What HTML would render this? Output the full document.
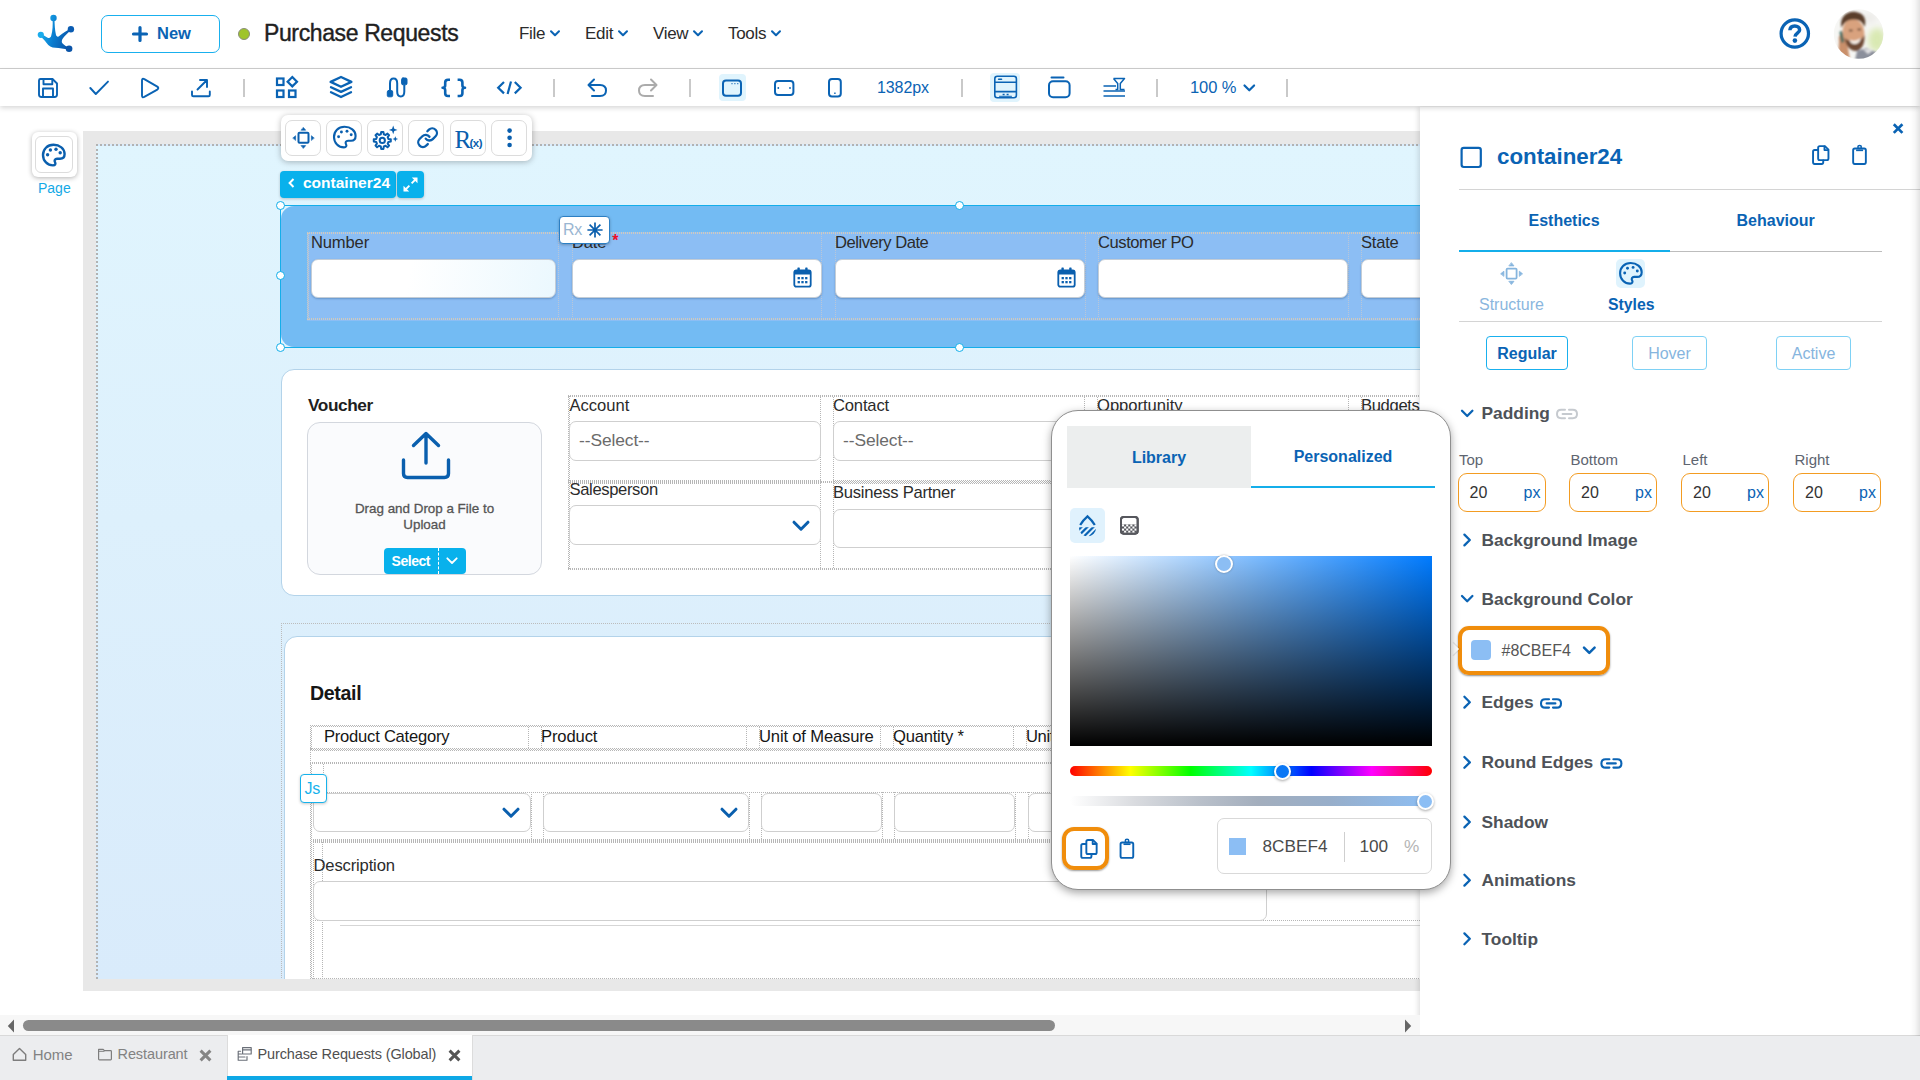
<!DOCTYPE html>
<html>
<head>
<meta charset="utf-8">
<title>Purchase Requests</title>
<style>
*{box-sizing:border-box;margin:0;padding:0}
html,body{width:1920px;height:1080px;overflow:hidden;background:#fff;font-family:"Liberation Sans",sans-serif;color:#222}
.abs{position:absolute}
#root{position:relative;width:1920px;height:1080px;overflow:hidden;background:#fff}
svg{display:block;overflow:visible}
.t{position:absolute;white-space:nowrap;line-height:1}
.blue{color:#0a63b4}
/* top bar */
#topbar{left:0;top:0;width:1920px;height:69px;background:#fff;border-bottom:1px solid #cfcfcf}
#toolbar{z-index:5;left:0;top:69px;width:1920px;height:37px;background:#fff;box-shadow:0 2px 5px rgba(0,0,0,.16)}
.sep{position:absolute;top:10px;width:2px;height:18px;background:#c9c9c9}
/* canvas */
#canvas{left:0;top:107px;width:1420px;height:908px;overflow:hidden;background:#fff}
#gray{left:83px;top:24px;width:1340px;height:859px;background:#e8e8e8}
#page{left:96px;top:37px;width:1330px;height:835px;background:linear-gradient(180deg,#e0f5fe 0%,#ddf0fc 45%,#d9ebfb 100%);border-left:2px dotted #b2b2b2;border-top:2px dotted #b2b2b2}
.inp{position:absolute;background:#fff;border:1px solid #cfcfcf;border-radius:7px}
.lbl{position:absolute;white-space:nowrap;line-height:1;font-size:16px;color:#2b2b2b}
.vd{position:absolute;width:0;border-left:1px dotted #a9a9a9}
.hd{position:absolute;height:0;border-top:1px dotted #a9a9a9}
.hnd{width:9px;height:9px;border-radius:50%;background:#fff;border:1.5px solid #10aeea}
.fb{top:13px;width:36px;height:36px;border:1px solid #dcdcdc;border-radius:7px;background:#fff}

.v1{position:absolute;width:1px;background:repeating-linear-gradient(to bottom,var(--c,#b4b4b4) 0 1px,transparent 1px 2px)}
.v2{position:absolute;width:2px;background:repeating-linear-gradient(to bottom,var(--c,#b4b4b4) 0 1px,transparent 1px 2px) 0 0/1px 100% no-repeat,repeating-linear-gradient(to bottom,transparent 0 1px,var(--c,#b4b4b4) 1px 2px) 1px 0/1px 100% no-repeat}
.h1{position:absolute;height:1px;background:repeating-linear-gradient(to right,var(--c,#b4b4b4) 0 1px,transparent 1px 2px)}
.h2{position:absolute;height:2px;background:repeating-linear-gradient(to right,var(--c,#b4b4b4) 0 1px,transparent 1px 2px)}
.h4{position:absolute;height:4px;background:repeating-linear-gradient(to right,var(--c,#b4b4b4) 0 1px,transparent 1px 2px)}
.hx{position:absolute;height:2px;background:repeating-linear-gradient(to right,var(--c,#b4b4b4) 0 1px,transparent 1px 2px) 0 0/100% 1px no-repeat,repeating-linear-gradient(to right,transparent 0 1px,var(--c,#b4b4b4) 1px 2px) 0 1px/100% 1px no-repeat}
/* right panel */
#panel{left:1420px;top:107px;width:500px;height:929px;background:#fff;box-shadow:-2px 0 5px rgba(0,0,0,.12)}
.sec{position:absolute;white-space:nowrap;line-height:1;font-size:17.35px;font-weight:bold;color:#4e5258}
.pl{font-size:15px;color:#5e6570}
.pi{top:366px;width:88px;height:39px;border:1.5px solid #f39c22;border-radius:9px}
.pv{top:378px;font-size:16px;color:#333}
.pu{top:378px;font-size:16px;color:#0a63b4}
#panel .t{margin-top:1px}
#panel .sec{margin-top:.8px}
#panel .pl{margin-top:0}
#panel .pv,#panel .pu{margin-top:.4px}
/* bottom */
#hscroll{left:0;top:1015px;width:1420px;height:21px;background:#f7f7f7}
#tabs{left:0;top:1035px;width:1920px;height:45px;background:#ecedef;border-top:1px solid #d9d9d9}
</style>
</head>
<body>
<div id="root">

<!-- ================= CANVAS ================= -->
<div id="canvas" class="abs">
  <div id="gray" class="abs"></div>
  <div id="page" class="abs"></div>
  <!-- ===== selected container24 ===== -->
  <div class="abs" style="left:281px;top:99px;width:1160px;height:141px;border-radius:13px;background:#73bbf3"></div>
  <div class="abs" style="left:279.5px;top:97.5px;width:1160px;height:143px;border:1.6px solid #14aeea"></div>
  <div class="abs" style="left:307px;top:125px;width:1130px;height:89px;background:#8cbef4"></div>
  <div class="v2" style="left:307px;top:125px;height:88px;--c:#cdc9c0"></div>
  <div class="h2" style="left:307px;top:125px;width:1133px;--c:#cdc9c0"></div>
  <div class="h2" style="left:307px;top:211px;width:1133px;--c:#cdc9c0"></div>
  <div class="v1" style="left:558px;top:127px;height:84px;--c:#b9c6d8"></div>
  <div class="v1" style="left:572px;top:127px;height:84px;--c:#b9c6d8"></div>
  <div class="v1" style="left:821px;top:127px;height:84px;--c:#b9c6d8"></div>
  <div class="v1" style="left:835px;top:127px;height:84px;--c:#b9c6d8"></div>
  <div class="v1" style="left:1085px;top:127px;height:84px;--c:#b9c6d8"></div>
  <div class="v1" style="left:1098px;top:127px;height:84px;--c:#b9c6d8"></div>
  <div class="v1" style="left:1348px;top:127px;height:84px;--c:#b9c6d8"></div>
  <div class="v1" style="left:1361px;top:127px;height:84px;--c:#b9c6d8"></div>
  <div class="lbl" style="left:311px;top:127.7px;font-size:16.6px;letter-spacing:-0.172px">Number</div>
  <div class="lbl" style="left:572px;top:127.7px;font-size:16.6px;letter-spacing:-.2px">Date <span style="color:#ee1126;font-size:16px;font-weight:bold;position:relative;top:-1.5px;left:1.5px">*</span></div>
  <div class="lbl" style="left:835px;top:127.7px;font-size:16.6px;letter-spacing:-0.485px">Delivery Date</div>
  <div class="lbl" style="left:1098px;top:127.7px;font-size:16.6px;letter-spacing:-0.456px">Customer PO</div>
  <div class="lbl" style="left:1361px;top:127.7px;font-size:16.6px;letter-spacing:-0.23px">State</div>
  <div class="inp" style="left:311px;top:152px;width:245px;height:39px;background:linear-gradient(100deg,#fff 0%,#fff 40%,#ebf8fe 100%);border-color:#c4cdd6;box-shadow:0 1px 2px rgba(0,40,90,.28)"></div>
  <div class="inp" style="left:572px;top:152px;width:250px;height:39px;border-color:#c4cdd6;box-shadow:0 1px 2px rgba(0,40,90,.28)"></div>
  <div class="inp" style="left:835px;top:152px;width:250px;height:39px;border-color:#c4cdd6;box-shadow:0 1px 2px rgba(0,40,90,.28)"></div>
  <div class="inp" style="left:1098px;top:152px;width:250px;height:39px;border-color:#c4cdd6;box-shadow:0 1px 2px rgba(0,40,90,.28)"></div>
  <div class="inp" style="left:1361px;top:152px;width:100px;height:39px;border-color:#c4cdd6;box-shadow:0 1px 2px rgba(0,40,90,.28)"></div>
  <!-- calendar icons -->
  <svg class="abs" style="left:793px;top:160px" width="19" height="21" viewBox="0 0 19 21"><rect x="1.3" y="3.3" width="16.4" height="16.4" rx="2" fill="#fff" stroke="#0a5fae" stroke-width="1.8"/><path d="M1.3 4.5Q1.3 3.3 2.5 3.3H16.5Q17.7 3.3 17.7 4.5V7.6H1.3Z" fill="#0a5fae"/><rect x="4.4" y=".4" width="2.4" height="4" rx=".7" fill="#0a5fae"/><rect x="12.2" y=".4" width="2.4" height="4" rx=".7" fill="#0a5fae"/><g fill="#0a5fae"><rect x="4.6" y="10" width="2.3" height="2.3"/><rect x="8.35" y="10" width="2.3" height="2.3"/><rect x="12.1" y="10" width="2.3" height="2.3"/><rect x="4.6" y="14" width="2.3" height="2.3"/><rect x="8.35" y="14" width="2.3" height="2.3"/><rect x="12.1" y="14" width="2.3" height="2.3"/></g></svg>
  <svg class="abs" style="left:1057px;top:160px" width="19" height="21" viewBox="0 0 19 21"><rect x="1.3" y="3.3" width="16.4" height="16.4" rx="2" fill="#fff" stroke="#0a5fae" stroke-width="1.8"/><path d="M1.3 4.5Q1.3 3.3 2.5 3.3H16.5Q17.7 3.3 17.7 4.5V7.6H1.3Z" fill="#0a5fae"/><rect x="4.4" y=".4" width="2.4" height="4" rx=".7" fill="#0a5fae"/><rect x="12.2" y=".4" width="2.4" height="4" rx=".7" fill="#0a5fae"/><g fill="#0a5fae"><rect x="4.6" y="10" width="2.3" height="2.3"/><rect x="8.35" y="10" width="2.3" height="2.3"/><rect x="12.1" y="10" width="2.3" height="2.3"/><rect x="4.6" y="14" width="2.3" height="2.3"/><rect x="8.35" y="14" width="2.3" height="2.3"/><rect x="12.1" y="14" width="2.3" height="2.3"/></g></svg>
  <!-- handles -->
  <div class="abs hnd" style="left:276px;top:94px"></div>
  <div class="abs hnd" style="left:955px;top:94px"></div>
  <div class="abs hnd" style="left:276px;top:164px"></div>
  <div class="abs hnd" style="left:276px;top:236px"></div>
  <div class="abs hnd" style="left:955px;top:236px"></div>
  <!-- Rx badge -->
  <div class="abs" style="left:559px;top:109px;width:51px;height:28px;background:#fff;border:1px solid #2b7fc4;border-radius:4px;box-shadow:0 1px 3px rgba(0,0,0,.25)"></div>
  <div class="t" style="left:563px;top:115px;font-size:16px;color:#9ab6d2;letter-spacing:-.3px">Rx</div>
  <svg class="abs" style="left:586px;top:114px" width="18" height="18" viewBox="0 0 18 18"><path d="M9 1.4V16.6M1.4 9H16.6M3.6 3.6L14.4 14.4M3.6 14.4L14.4 3.6" stroke="#0a5fae" stroke-width="1.7" fill="none"/></svg>
  <!-- container tag -->
  <div class="abs" style="left:280px;top:63.5px;width:116px;height:27px;background:#08b1ec;border-radius:4px;box-shadow:0 1px 3px rgba(0,0,0,.2)"></div>
  <svg class="abs" style="left:288px;top:71px" width="7" height="10" viewBox="0 0 7 10"><path d="M5.5 1L1.6 5L5.5 9" stroke="#fff" stroke-width="2" fill="none"/></svg>
  <div class="t" style="left:303px;top:68px;font-size:15.5px;font-weight:bold;color:#fff">container24</div>
  <div class="abs" style="left:397px;top:63.5px;width:27px;height:27px;background:#08b1ec;border-radius:4px;box-shadow:0 1px 3px rgba(0,0,0,.2)"></div>
  <svg class="abs" style="left:402px;top:68.5px" width="17" height="17" viewBox="0 0 17 17"><path d="M9.6 7.4L14.6 2.4M7.4 9.6L2.4 14.6" stroke="#fff" stroke-width="1.9"/><path d="M9.8 1.5H15.5V7.2Z M7.2 15.5H1.5V9.8Z" fill="#fff"/></svg>
  <!-- float toolbar -->
  <div class="abs" style="left:281px;top:8px;width:251px;height:46px;background:#fff;border-radius:7px;box-shadow:0 1px 6px rgba(0,0,0,.28)"></div>
  <div class="abs fb" style="left:285px"></div><div class="abs fb" style="left:326px"></div><div class="abs fb" style="left:367px"></div><div class="abs fb" style="left:408px"></div><div class="abs fb" style="left:450px"></div><div class="abs fb" style="left:491px"></div>
  <svg class="abs" style="left:281px;top:8px" width="251" height="46" viewBox="281 115 251 46" fill="none" stroke="#0a5fae" stroke-width="2" stroke-linecap="round" stroke-linejoin="round">
    <!-- move -->
    <rect x="298.5" y="132.8" width="10" height="10" rx="1"/>
    <g fill="#0a5fae" stroke-width=".6"><path d="M303.5 127.6L305.7 130.2H301.3Z"/><path d="M303.5 148.2L305.7 145.6H301.3Z"/><path d="M293 137.9L295.6 135.7V140.1Z"/><path d="M314 137.9L311.4 135.7V140.1Z"/></g>
    <!-- palette -->
    <path d="M344.5 126.8C338.3 126.8 334 131.3 334 137C334 143 338.6 147.4 344 147.4C346.3 147.4 346.9 145.6 346 144.2C345 142.6 346 140.7 348 140.7H351C354 140.7 355.6 138.6 355.6 136C355.6 130.6 350.6 126.8 344.5 126.8Z" stroke-width="2.1"/>
    <g fill="#0a5fae" stroke="none"><circle cx="338.6" cy="136.8" r="1.45"/><circle cx="341.4" cy="132" r="1.45"/><circle cx="347" cy="131.2" r="1.45"/><circle cx="351.2" cy="134.8" r="1.45"/></g>
    <!-- gear + sparkles -->
    <g stroke-width="2"><circle cx="382.3" cy="140.4" r="2.6"/><path d="M380.8 134.3L381.2 131.9L383.4 131.9L383.8 134.3L385.6 135.0L387.5 133.6L389.1 135.2L387.7 137.1L388.4 138.9L390.8 139.3L390.8 141.5L388.4 141.9L387.7 143.7L389.1 145.6L387.5 147.2L385.6 145.8L383.8 146.5L383.4 148.9L381.2 148.9L380.8 146.5L379.0 145.8L377.1 147.2L375.5 145.6L376.9 143.7L376.2 141.9L373.8 141.5L373.8 139.3L376.2 138.9L376.9 137.1L375.5 135.2L377.1 133.6L379.0 135.0Z"/></g>
    <g fill="#0a5fae" stroke="none"><path d="M393.2 125.6L394.3 128.8L397.5 129.9L394.3 131L393.2 134.2L392.1 131L388.9 129.9L392.1 128.8Z"/><path d="M395.3 136.2L396.1 138.2L398.1 139L396.1 139.8L395.3 141.8L394.5 139.8L392.5 139L394.5 138.2Z"/></g>
    <!-- link -->
    <g stroke-width="2.45" transform="translate(416.3 126.4) scale(.94)"><path d="M10 13a5 5 0 0 0 7.54.54l3-3a5 5 0 0 0-7.07-7.07l-1.72 1.71"/><path d="M14 11a5 5 0 0 0-7.54-.54l-3 3a5 5 0 0 0 7.07 7.07l1.71-1.71"/></g>
    <!-- dots -->
    <g fill="#0a5fae" stroke="none"><circle cx="509.6" cy="130.6" r="2.3"/><circle cx="509.6" cy="137.8" r="2.3"/><circle cx="509.6" cy="145" r="2.3"/></g>
  </svg>
  <div class="t" style="left:454.5px;top:19.5px;font-family:'Liberation Serif',serif;font-size:25px;color:#0a5fae;letter-spacing:-1px">R</div>
  <div class="t" style="left:469.5px;top:30.5px;font-size:11.5px;font-weight:bold;color:#0a5fae;letter-spacing:-.5px">(x)</div>
  <!-- Page button -->
  <div class="abs" style="left:32px;top:24.5px;width:45px;height:45px;background:#fff;border-radius:6px;box-shadow:0 1px 5px rgba(0,0,0,.3)"></div>
  <div class="abs" style="left:35px;top:29px;width:38px;height:37px;border:1px solid #dcdcdc;border-radius:6px"></div>
  <svg class="abs" style="left:40px;top:33.5px" width="28" height="28" viewBox="331 123 28 28" fill="none" stroke="#0a5fae" stroke-width="2.4" stroke-linecap="round" stroke-linejoin="round"><path d="M344.5 126.8C338.3 126.8 334 131.3 334 137C334 143 338.6 147.4 344 147.4C346.3 147.4 346.9 145.6 346 144.2C345 142.6 346 140.7 348 140.7H351C354 140.7 355.6 138.6 355.6 136C355.6 130.6 350.6 126.8 344.5 126.8Z"/><g fill="#0a5fae" stroke="none"><circle cx="338.6" cy="136.8" r="1.7"/><circle cx="341.4" cy="132" r="1.7"/><circle cx="347" cy="131.2" r="1.7"/><circle cx="351.2" cy="134.8" r="1.7"/></g></svg>
  <div class="t" style="left:38px;top:74px;font-size:14px;color:#14a9e6">Page</div>
  <!-- ===== card 2 ===== -->
  <div class="abs" style="left:281px;top:262px;width:1170px;height:227px;background:#fff;border:1px solid #b3d3ea;border-radius:13px"></div>
  <div class="t" style="left:308px;top:290px;font-size:17.3px;font-weight:bold;color:#1f1f1f;letter-spacing:-.45px">Voucher</div>
  <div class="abs" style="left:307px;top:315px;width:235px;height:153px;background:#fafbfd;border:1px solid #d3d7de;border-radius:13px"></div>
  <svg class="abs" style="left:400px;top:323px" width="52" height="54" viewBox="0 0 52 54" fill="none" stroke="#0a5fae" stroke-width="3.4" stroke-linecap="round" stroke-linejoin="round"><path d="M26 33V4M13.5 15.5L26 3.5L38.5 15.5"/><path d="M3.5 30V43.5Q3.5 47.5 7.5 47.5H44.5Q48.5 47.5 48.5 43.5V30"/></svg>
  <div class="t" style="left:307px;top:394px;width:235px;text-align:center;font-size:13.4px;color:#555;-webkit-text-stroke:.3px #555;line-height:16px;white-space:normal;padding:0 40px">Drag and Drop a File to Upload</div>
  <div class="abs" style="left:384px;top:441px;width:82px;height:26px;background:#08b1ec;border-radius:4px"></div>
  <div class="abs" style="left:437.5px;top:441px;width:0;height:26px;border-left:1px dashed #fff"></div>
  <div class="t" style="left:391.5px;top:447px;font-size:14px;font-weight:bold;color:#fff;letter-spacing:-.45px">Select</div>
  <svg class="abs" style="left:446px;top:450px" width="12" height="8" viewBox="0 0 12 8"><path d="M1.3 1.3L6 6L10.7 1.3" fill="none" stroke="#fff" stroke-width="1.8" stroke-linecap="round" stroke-linejoin="round"/></svg>
  <!-- grid dotted -->
  <div class="v2" style="left:568px;top:288px;height:175px;--c:#b6b6b6"></div>
  <div class="h2" style="left:568px;top:288px;width:872px;--c:#b6b6b6"></div>
  <div class="h2" style="left:568px;top:461px;width:872px;--c:#b6b6b6"></div>
  <div class="h4" style="left:568px;top:373px;width:253px;--c:#b6b6b6"></div>
  <div class="h2" style="left:821px;top:374px;width:12px;--c:#b6b6b6"></div>
  <div class="hx" style="left:833px;top:373px;width:252px;--c:#b6b6b6"></div>
  <div class="hx" style="left:833px;top:375px;width:252px;--c:#b6b6b6"></div>
  <div class="h2" style="left:1085px;top:374px;width:12px;--c:#b6b6b6"></div>
  <div class="h4" style="left:1097px;top:373px;width:251px;--c:#b6b6b6"></div>
  <div class="h2" style="left:1348px;top:374px;width:13px;--c:#b6b6b6"></div>
  <div class="h4" style="left:1361px;top:373px;width:79px;--c:#b6b6b6"></div>
  <div class="v1" style="left:820px;top:290px;height:171px;--c:#b6b6b6"></div>
  <div class="v1" style="left:833px;top:290px;height:171px;--c:#b6b6b6"></div>
  <div class="v1" style="left:1084px;top:290px;height:171px;--c:#b6b6b6"></div>
  <div class="v1" style="left:1097px;top:290px;height:171px;--c:#b6b6b6"></div>
  <div class="v1" style="left:1348px;top:290px;height:171px;--c:#b6b6b6"></div>
  <div class="v1" style="left:1361px;top:290px;height:171px;--c:#b6b6b6"></div>
  <div class="lbl" style="left:569.5px;top:290.5px;font-size:16.6px;letter-spacing:-0.024px">Account</div>
  <div class="lbl" style="left:833px;top:290.5px;font-size:16.6px;letter-spacing:-0.17px">Contact</div>
  <div class="lbl" style="left:1097px;top:290.5px;font-size:16.6px;letter-spacing:-0.026px">Opportunity</div>
  <div class="lbl" style="left:1361px;top:290.5px;font-size:16.6px;letter-spacing:-0.342px">Budgets</div>
  <div class="lbl" style="left:569.5px;top:374.7px;font-size:16.6px;letter-spacing:-0.359px">Salesperson</div>
  <div class="lbl" style="left:833px;top:377.7px;font-size:16.6px;letter-spacing:-0.254px">Business Partner</div>
  <div class="inp" style="left:569px;top:314px;width:252px;height:40px"></div>
  <div class="inp" style="left:833px;top:314px;width:252px;height:40px"></div>
  <div class="inp" style="left:1097px;top:314px;width:252px;height:40px"></div>
  <div class="inp" style="left:1361px;top:314px;width:100px;height:40px"></div>
  <div class="inp" style="left:569px;top:398px;width:252px;height:40px"></div>
  <div class="inp" style="left:833px;top:402px;width:252px;height:39px"></div>
  <div class="t" style="left:579px;top:325px;font-size:17.4px;color:#6b6b6b;letter-spacing:-.1px">--Select--</div>
  <div class="t" style="left:843px;top:325px;font-size:17.4px;color:#6b6b6b;letter-spacing:-.1px">--Select--</div>
  <svg class="abs" style="left:792px;top:413px" width="18" height="12" viewBox="0 0 18 12"><path d="M2 2.2L9 9.2L16 2.2" fill="none" stroke="#0a5fae" stroke-width="3" stroke-linecap="round" stroke-linejoin="round"/></svg>
  <!-- ===== card 3 ===== -->
  <div class="v1" style="left:281px;top:516px;height:380px;--c:#bcbcbc"></div>
  <div class="h1" style="left:281px;top:516px;width:1170px;--c:#bcbcbc"></div>
  <div class="abs" style="left:284px;top:529px;width:1170px;height:380px;background:#fff;border:1px solid #b3d3ea;border-radius:13px"></div>
  <div class="t" style="left:310px;top:576px;font-size:19.6px;font-weight:bold;color:#161616;letter-spacing:-.35px;margin-top:.8px">Detail</div>
  <!-- header grid -->
  <div class="hx" style="left:310px;top:618px;width:1130px;--c:#b6b6b6"></div>
  <div class="v2" style="left:310px;top:618px;height:25px;--c:#b6b6b6"></div>
  <div class="hx" style="left:310px;top:641px;width:1130px;--c:#b6b6b6"></div>
  <div class="h1" style="left:310px;top:643px;width:1130px;--c:#b6b6b6"></div>
  <div class="v1" style="left:528px;top:620px;height:21px;--c:#b6b6b6"></div>
  <div class="v1" style="left:541px;top:620px;height:21px;--c:#b6b6b6"></div>
  <div class="v1" style="left:746px;top:620px;height:21px;--c:#b6b6b6"></div>
  <div class="v1" style="left:759px;top:620px;height:21px;--c:#b6b6b6"></div>
  <div class="v1" style="left:880px;top:620px;height:21px;--c:#b6b6b6"></div>
  <div class="v1" style="left:893px;top:620px;height:21px;--c:#b6b6b6"></div>
  <div class="v1" style="left:1013px;top:620px;height:21px;--c:#b6b6b6"></div>
  <div class="v1" style="left:1026px;top:620px;height:21px;--c:#b6b6b6"></div>
  <div class="v1" style="left:310px;top:643px;height:12px;--c:#b6b6b6"></div>
  <div class="h2" style="left:310px;top:655px;width:1130px;--c:#b6b6b6"></div>
  <div class="v2" style="left:310px;top:657px;height:216px;--c:#b6b6b6"></div>
  <div class="v1" style="left:323px;top:657px;height:28px;--c:#b6b6b6"></div>
  <div class="h1" style="left:313px;top:685px;width:1127px;--c:#b6b6b6"></div>
  <div class="v1" style="left:531px;top:685px;height:48px;--c:#b6b6b6"></div>
  <div class="v1" style="left:543px;top:685px;height:48px;--c:#b6b6b6"></div>
  <div class="v1" style="left:749px;top:685px;height:48px;--c:#b6b6b6"></div>
  <div class="v1" style="left:761px;top:685px;height:48px;--c:#b6b6b6"></div>
  <div class="v1" style="left:882px;top:685px;height:48px;--c:#b6b6b6"></div>
  <div class="v1" style="left:894px;top:685px;height:48px;--c:#b6b6b6"></div>
  <div class="v1" style="left:1015px;top:685px;height:48px;--c:#b6b6b6"></div>
  <div class="v1" style="left:1028px;top:685px;height:48px;--c:#b6b6b6"></div>
  <div class="h4" style="left:313px;top:732px;width:1127px;--c:#b6b6b6"></div>
  <div class="v1" style="left:313px;top:735px;height:138px;--c:#b6b6b6"></div>
  <div class="v1" style="left:322px;top:735px;height:138px;--c:#b6b6b6"></div>
  <div class="h1" style="left:313px;top:813px;width:1127px;--c:#b6b6b6"></div>
  <div class="h1" style="left:310px;top:871px;width:1130px;--c:#b6b6b6"></div>
  <div class="lbl" style="left:324px;top:621.7px;color:#161616;font-size:16.6px;letter-spacing:-0.24px">Product Category</div>
  <div class="lbl" style="left:541px;top:621.7px;color:#161616;font-size:16.6px;letter-spacing:-0.127px">Product</div>
  <div class="lbl" style="left:759px;top:621.7px;color:#161616;font-size:16.6px;letter-spacing:-0.163px">Unit of Measure</div>
  <div class="lbl" style="left:893px;top:621.7px;color:#161616;font-size:16.6px;letter-spacing:-0.217px">Quantity *</div>
  <div class="lbl" style="left:1026px;top:621.7px;color:#161616;font-size:16.6px;letter-spacing:-0.394px">Unit Price</div>
  <!-- row grid -->
  <div class="inp" style="left:313px;top:686px;width:218px;height:39px"></div>
  <div class="inp" style="left:543px;top:686px;width:206px;height:39px"></div>
  <div class="inp" style="left:761px;top:686px;width:121px;height:39px"></div>
  <div class="inp" style="left:894px;top:686px;width:121px;height:39px"></div>
  <div class="inp" style="left:1028px;top:686px;width:121px;height:39px"></div>
  <svg class="abs" style="left:502px;top:700px" width="18" height="12" viewBox="0 0 18 12"><path d="M2 2.2L9 9.2L16 2.2" fill="none" stroke="#0a5fae" stroke-width="3" stroke-linecap="round" stroke-linejoin="round"/></svg>
  <svg class="abs" style="left:720px;top:700px" width="18" height="12" viewBox="0 0 18 12"><path d="M2 2.2L9 9.2L16 2.2" fill="none" stroke="#0a5fae" stroke-width="3" stroke-linecap="round" stroke-linejoin="round"/></svg>
  <!-- Js badge -->
  <div class="abs" style="left:300px;top:667px;width:27px;height:29px;background:#fff;border:1px solid #16b2ec;border-radius:4px;box-shadow:0 1px 3px rgba(0,0,0,.22)"></div>
  <div class="t" style="left:304.5px;top:674px;font-size:16px;color:#16b2ec;letter-spacing:-.2px">Js</div>
  <div class="lbl" style="left:313.5px;top:750.7px;font-size:16.6px;letter-spacing:-0.156px">Description</div>
  <div class="inp" style="left:313px;top:774px;width:954px;height:40px"></div>
  <div class="abs" style="left:340px;top:818px;width:1100px;height:1px;background:#d6d6d6"></div>
  <div class="abs" style="left:0;top:872px;width:1420px;height:40px;background:#fff"></div>
  <div class="abs" style="left:83px;top:872px;width:1340px;height:12px;background:#e8e8e8"></div>
</div>

<!-- ================= TOP BAR ================= -->
<div id="topbar" class="abs">
  <!-- logo -->
  <svg class="abs" style="left:34px;top:10px" width="44" height="46" viewBox="34 10 44 46">
    <defs><linearGradient id="lg" gradientUnits="userSpaceOnUse" x1="40" y1="34" x2="70" y2="42"><stop offset="0" stop-color="#1aacec"/><stop offset=".45" stop-color="#0a7ccf"/><stop offset="1" stop-color="#0a52a6"/></linearGradient></defs>
    <g fill="url(#lg)">
      <path d="M52.5 18.5C53 25 52.6 31 51.2 35.8C50.6 38 49.2 38.4 47.2 37.4C45.4 36.4 43.4 35.2 41.3 33.9L40.2 35.8C42.6 38.4 45 40.6 46.6 43C48.6 46 51.6 47.6 55.4 47.8C59.6 48 63.8 48.6 68.6 49.8L69.2 48C66.4 46.6 63.8 45 62.6 43.6C61.4 42.2 61.6 40.4 62.8 38.6C64.6 35.8 67.6 33 71.2 30.2L70.3 28.7C66 31 62.4 33.2 59.6 35.8C58 37.4 56.4 36.8 55.9 34.6C54.9 30.2 54.6 24.6 54.5 18.5Z"/>
      <circle cx="53.5" cy="18" r="3.2"/>
      <circle cx="70.9" cy="29.2" r="3.2" fill="#0a5cb2"/>
      <circle cx="40.8" cy="34.8" r="3.1" fill="#1aacec"/>
      <circle cx="69.1" cy="48.8" r="3.3" fill="#0a54a8"/>
    </g>
  </svg>
  <!-- New button -->
  <div class="abs" style="left:101px;top:15px;width:119px;height:38px;border:1px solid #19b0ee;border-radius:7px"></div>
  <svg class="abs" style="left:132px;top:26px" width="16" height="16" viewBox="0 0 16 16"><path d="M8 1.5V14.5M1.5 8H14.5" stroke="#0a63b4" stroke-width="3.2" stroke-linecap="round" fill="none"/></svg>
  <div class="t blue" style="left:157px;top:25px;font-size:16.5px;font-weight:bold">New</div>
  <div class="abs" style="left:238px;top:28px;width:12px;height:12px;border-radius:50%;background:#9fc42a;border:1px solid #8a8f7a"></div>
  <div class="t" id="ttl" style="left:264px;top:21.5px;font-size:23px;color:#1f1f1f;-webkit-text-stroke:.4px #1f1f1f;letter-spacing:-.38px">Purchase Requests</div>
  <!-- menus -->
  <div class="t" style="left:519px;top:25px;font-size:17px;color:#2b2b2b;letter-spacing:-.3px">File</div>
  <div class="t" style="left:585px;top:25px;font-size:17px;color:#2b2b2b;letter-spacing:-.3px">Edit</div>
  <div class="t" style="left:653px;top:25px;font-size:17px;color:#2b2b2b;letter-spacing:-.3px">View</div>
  <div class="t" style="left:728px;top:25px;font-size:17px;color:#2b2b2b;letter-spacing:-.3px">Tools</div>
  <svg class="abs" style="left:550px;top:30px" width="10" height="7" viewBox="0 0 10 7"><path d="M1 1.2L5 5.3L9 1.2" fill="none" stroke="#0a63b4" stroke-width="2" stroke-linecap="round" stroke-linejoin="round"/></svg>
  <svg class="abs" style="left:618px;top:30px" width="10" height="7" viewBox="0 0 10 7"><path d="M1 1.2L5 5.3L9 1.2" fill="none" stroke="#0a63b4" stroke-width="2" stroke-linecap="round" stroke-linejoin="round"/></svg>
  <svg class="abs" style="left:693px;top:30px" width="10" height="7" viewBox="0 0 10 7"><path d="M1 1.2L5 5.3L9 1.2" fill="none" stroke="#0a63b4" stroke-width="2" stroke-linecap="round" stroke-linejoin="round"/></svg>
  <svg class="abs" style="left:771px;top:30px" width="10" height="7" viewBox="0 0 10 7"><path d="M1 1.2L5 5.3L9 1.2" fill="none" stroke="#0a63b4" stroke-width="2" stroke-linecap="round" stroke-linejoin="round"/></svg>
  <!-- help -->
  <svg class="abs" style="left:1779px;top:18px" width="32" height="32" viewBox="0 0 32 32"><circle cx="15.8" cy="15.5" r="13.7" fill="none" stroke="#0a63b4" stroke-width="3.2"/><path d="M10.9 12.3C11 9.3 13.1 7.9 15.8 7.9C18.7 7.9 20.6 9.5 20.6 11.9C20.6 15 16.1 15.2 16 18.6" fill="none" stroke="#0a63b4" stroke-width="3.5" stroke-linecap="butt"/><circle cx="15.9" cy="22.6" r="2.3" fill="#0a63b4"/></svg>
  <!-- avatar -->
  <svg class="abs" style="left:1833px;top:8px" width="52" height="52" viewBox="0 0 52 52">
    <defs><clipPath id="av"><circle cx="25.6" cy="26" r="24.8"/></clipPath><filter id="bl" x="-20%" y="-20%" width="140%" height="140%"><feGaussianBlur stdDeviation="1.1"/></filter><filter id="bl2" x="-30%" y="-30%" width="160%" height="160%"><feGaussianBlur stdDeviation="3"/></filter></defs>
    <g clip-path="url(#av)">
      <rect width="52" height="52" fill="#f6f6f4"/>
      <ellipse cx="44" cy="32" rx="9" ry="12" fill="#d9e9b2" filter="url(#bl2)"/>
      <ellipse cx="36" cy="10" rx="8" ry="5" fill="#ecebe8" filter="url(#bl2)"/>
      <g filter="url(#bl)">
        <path d="M22 52L24 43L33 40L45 45L49 53Z" fill="#8b8f9b"/>
        <path d="M30 41L35 46L40 42Z" fill="#e4e4e6"/>
        <path d="M6 33C5 28 8 24 11 26L15 40L17 52H5Z" fill="#c98f6a"/>
        <ellipse cx="20.5" cy="24.5" rx="10.8" ry="13.8" fill="#d9a27e" transform="rotate(-8 20.5 24.5)"/>
        <path d="M8.5 20C6 9 14 2.5 23 4C31 5 34 12 31.5 19C30 14 26 11 20 11.5C14 12 10.5 15 8.5 20Z" fill="#5a3d2c"/>
        <path d="M11.5 30C13 38 17 43 23 43C29 42 32 36 31.5 27C29 31 26 33 22 33C18 33 14 32.5 11.5 30Z" fill="#6e4a35"/>
        <path d="M16.5 31.5Q22 34.5 28 30Q26.5 36 21.5 36Q17.5 36 16.5 31.5Z" fill="#f7efe9"/>
        <path d="M16 22.5H19.5M24.5 21.5H28" stroke="#4a3226" stroke-width="1.6"/>
        <path d="M6.5 24L9 22.5L11 34L8.5 35Z" fill="#3d6b60"/>
      </g>
    </g>
  </svg>
</div>
<div id="toolbar" class="abs">
  <svg class="abs" style="left:0;top:0" width="1300" height="37" viewBox="0 69 1300 37" fill="none" stroke="#0a63b4" stroke-width="1.9" stroke-linecap="round" stroke-linejoin="round">
    <!-- save -->
    <path d="M40.5 79H52.5L57 83.5V94.5Q57 97 54.5 97H41.5Q39 97 39 94.5V80.5Q39 79 40.5 79Z"/>
    <path d="M43.5 79.3V84.2H52.3V79.3"/><path d="M43 96.8V88.5H53V96.8"/>
    <!-- check -->
    <path d="M90.3 88L95.8 94L108 81.6"/>
    <!-- play -->
    <path d="M142 80.5V95.5Q142 98 144.3 96.8L157.3 89.6Q159.3 88 157.3 86.6L144.3 79.2Q142 78 142 80.5Z"/>
    <!-- export -->
    <path d="M192 91.5V95Q192 96.3 193.3 96.3H208.5Q209.8 96.3 209.8 95V91.5"/><path d="M197.5 89.5L207 80M200 80H207V87"/>
    <!-- widgets -->
    <g stroke-width="2.2" stroke-linejoin="miter" stroke-linecap="square"><rect x="277" y="78.5" width="6.5" height="6.5"/><rect x="277" y="90.5" width="6.5" height="6.5"/><rect x="289" y="90.5" width="6.5" height="6.5"/><path d="M292.3 77L297 81.7L292.3 86.4L287.6 81.7Z"/></g>
    <!-- layers -->
    <g stroke-width="2.3" stroke-linejoin="round"><path d="M341 77L351.4 81.9L341 86.8L330.6 81.9Z"/><path d="M331 87.2L341 91.9L351 87.2"/><path d="M331 92.3L341 97L351 92.3"/></g>
    <!-- cable -->
    <g stroke-width="2"><path d="M390 90V83.5Q390 78.6 393.6 78.6Q397.2 78.6 397.2 83.5V91.5Q397.2 96.4 400.8 96.4Q404.3 96.4 404.3 91.5V85.5"/><rect x="387.3" y="90.5" width="5.4" height="6.3" rx="1.4" fill="#0a63b4" stroke-width="1"/><rect x="401.6" y="78" width="5.4" height="6.8" rx="1.4" fill="#0a63b4" stroke-width="1"/></g>
    <!-- braces -->
    <g stroke-width="2.6" stroke-linecap="butt"><path d="M450 79.8H448Q445.2 79.8 445.2 82.6V85.3Q445.2 87.8 442.6 87.8Q445.2 87.8 445.2 90.3V93.2Q445.2 96 448 96H450"/><path d="M457.6 79.8H459.6Q462.4 79.8 462.4 82.6V85.3Q462.4 87.8 465 87.8Q462.4 87.8 462.4 90.3V93.2Q462.4 96 459.6 96H457.6"/></g>
    <!-- code -->
    <g stroke-width="2.2" stroke-linecap="butt" stroke-linejoin="miter"><path d="M504 82L498.2 87.7L504 93.4"/><path d="M514.8 82L520.6 87.7L514.8 93.4"/><path d="M511 81.5L507.6 94"/></g>
    <!-- undo -->
    <g stroke-width="2"><path d="M594 79.5L588.5 85L594 90.5"/><path d="M589 85H600Q606 85 606 90.5Q606 96 600 96H592"/></g>
    <!-- redo -->
    <g stroke-width="2" stroke="#ababab"><path d="M651 79.5L656.5 85L651 90.5"/><path d="M656 85H645Q639 85 639 90.5Q639 96 645 96H653"/></g>
    <!-- desktop -->
    <rect x="719" y="74" width="27" height="27" rx="4" fill="#e0f4fd" stroke="none"/>
    <rect x="723" y="80.4" width="18" height="15.4" rx="3" stroke-width="2" fill="#e0f4fd"/><path d="M731.5 83.6H732.5M734.4 83.6H735.4M737.3 83.6H738.3" stroke-width="1.3" stroke-linecap="butt"/>
    <!-- tablet -->
    <rect x="775" y="81" width="18.4" height="14" rx="3" stroke-width="2"/><circle cx="778.3" cy="88" r=".9" fill="#0a63b4" stroke="none"/><circle cx="790" cy="88" r=".9" fill="#0a63b4" stroke="none"/>
    <!-- phone -->
    <rect x="829" y="79" width="11.8" height="17.4" rx="3" stroke-width="2"/><path d="M834.2 93.2H835.6" stroke-width="1.4" stroke-linecap="butt"/>
    <!-- header/footer -->
    <rect x="990" y="73" width="30" height="29" rx="4" fill="#e0f4fd" stroke="none"/>
    <g stroke-width="1.6"><rect x="994.8" y="76.3" width="21.6" height="21.4" rx="2.5" fill="#e0f4fd"/><path d="M995 82.2H1016.2M995 91.6H1016.2"/><path d="M998.6 79.2H1001.6" stroke-width="1.4"/><path d="M1002.6 94.4H1004.6M1006.6 94.4H1008.6" stroke-width="1.5" stroke-linecap="butt"/><path d="M999.5 96.3H1011.5" stroke-width="1"/></g>
    <!-- containers -->
    <g stroke-width="2"><path d="M1051.5 77.5H1063.5"/><rect x="1049" y="81.2" width="20.6" height="16" rx="4"/></g>
    <!-- filter lines -->
    <g stroke-width="1.7" stroke-linecap="butt"><path d="M1103.5 86H1116M1103.5 91H1125M1103.5 96H1125"/><path d="M1113.5 78.6H1124.5L1120.3 83.6V89.5H1124.5M1113.5 78.6L1117.7 83.6V89.5H1115.5" stroke-width="1.5"/></g>
    <!-- zoom chevron -->
    <path d="M1244.5 85.5L1249.3 90.3L1254.1 85.5" stroke-width="2.2"/>
  </svg>
  <div class="sep" style="left:243px"></div>
  <div class="sep" style="left:553px"></div>
  <div class="sep" style="left:689px"></div>
  <div class="sep" style="left:961px"></div>
  <div class="sep" style="left:1156px"></div>
  <div class="sep" style="left:1286px"></div>
  <div class="t blue" style="left:877px;top:11px;font-size:16px;letter-spacing:-.1px">1382px</div>
  <div class="t blue" style="left:1190px;top:10px;font-size:16.5px;letter-spacing:-.1px">100 %</div>
</div>

<!-- ================= RIGHT PANEL ================= -->
<div id="panel" class="abs">
  <div class="abs" style="left:0;top:0;width:500px;height:929px">
  <svg class="abs" style="left:0;top:0" width="500" height="929" viewBox="1420 107 500 929" fill="none" stroke="#0a63b4" stroke-width="2" stroke-linecap="round" stroke-linejoin="round">
    <!-- close -->
    <path d="M1893.8 124.3L1902.4 132.9M1902.4 124.3L1893.8 132.9" stroke-width="2.7" stroke-linecap="butt"/>
    <!-- checkbox -->
    <rect x="1461.6" y="147.8" width="19.2" height="19.2" rx="2.2" stroke-width="2.2"/>
    <!-- copy -->
    <g stroke-width="1.9" transform="translate(731.8 -693.9)"><path d="M1086.35 841.65Q1086.35 840.05 1087.95 840.05H1093.1L1096.65 843.6V852.45Q1096.65 854.05 1095.05 854.05H1087.95Q1086.35 854.05 1086.35 852.45Z"/><path d="M1092.7 840.4V844H1096.3"/><path d="M1086.2 843.95H1082.85Q1081.25 843.95 1081.25 845.55V856.25Q1081.25 857.85 1082.85 857.85H1089.85Q1091.45 857.85 1091.45 856.25V854.3"/></g>
    <!-- paste -->
    <g stroke-width="1.9" transform="translate(732.6 -693.9)"><rect x="1120.55" y="842.45" width="12.7" height="15.4" rx="1.6"/><ellipse cx="1127" cy="840.9" rx="1.75" ry="1.6" stroke-width="1.5"/><path d="M1123.5 844.2H1130.5" stroke-width="1.7" stroke-linecap="butt"/></g>
    <!-- structure icon (light) -->
    <g stroke="#86b5de" fill="#86b5de"><rect x="1506.6" y="268.6" width="10" height="10" rx="1" fill="none" stroke-width="1.8"/><g stroke-width=".8"><path d="M1511.6 262.9L1514 265.9H1509.2Z"/><path d="M1511.6 284.3L1514 281.3H1509.2Z"/><path d="M1500.9 273.6L1503.9 271.2V276Z"/><path d="M1522.3 273.6L1519.3 271.2V276Z"/></g></g>
    <!-- styles icon -->
    <rect x="1616" y="259" width="29" height="29" rx="5" fill="#dff3fd" stroke="none"/>
    <g transform="translate(1286.1 136.2)"><path d="M344.5 126.8C338.3 126.8 334 131.3 334 137C334 143 338.6 147.4 344 147.4C346.3 147.4 346.9 145.6 346 144.2C345 142.6 346 140.7 348 140.7H351C354 140.7 355.6 138.6 355.6 136C355.6 130.6 350.6 126.8 344.5 126.8Z" stroke-width="2.1"/><g fill="#0a63b4" stroke="none"><circle cx="338.6" cy="136.8" r="1.45"/><circle cx="341.4" cy="132" r="1.45"/><circle cx="347" cy="131.2" r="1.45"/><circle cx="351.2" cy="134.8" r="1.45"/></g></g>
    <!-- chevrons -->
    <g stroke-width="2.3"><path d="M1462 410.8L1467.2 416L1472.4 410.8"/><path d="M1462 596L1467.2 601.2L1472.4 596"/>
    <path d="M1464.4 534.6L1469.8 540L1464.4 545.4"/><path d="M1464.4 696.8L1469.8 702.2L1464.4 707.6"/><path d="M1464.4 757L1469.8 762.4L1464.4 767.8"/><path d="M1464.4 816.6L1469.8 822L1464.4 827.4"/><path d="M1464.4 874.8L1469.8 880.2L1464.4 885.6"/><path d="M1464.4 933.4L1469.8 938.8L1464.4 944.2"/>
    <path d="M1584 647.6L1589.3 652.9L1594.6 647.6" stroke-width="2.5"/></g>
    <!-- link icons -->
    <g stroke-width="2" stroke="#c6cacf"><path d="M1565 409.8H1561.2Q1557 409.8 1557 414Q1557 418.2 1561.2 418.2H1565M1569 409.8H1572.8Q1577 409.8 1577 414Q1577 418.2 1572.8 418.2H1569M1562.6 414H1571.4"/></g>
    <g stroke-width="2.1"><path d="M1549 699.2H1545.2Q1541 699.2 1541 703.4Q1541 707.6 1545.2 707.6H1549M1553 699.2H1556.8Q1561 699.2 1561 703.4Q1561 707.6 1556.8 707.6H1553M1546.6 703.4H1555.4"/></g>
    <g stroke-width="2.1"><path d="M1609.4 759.2H1605.6Q1601.4 759.2 1601.4 763.4Q1601.4 767.6 1605.6 767.6H1609.4M1613.4 759.2H1617.2Q1621.4 759.2 1621.4 763.4Q1621.4 767.6 1617.2 767.6H1613.4M1607 763.4H1615.8"/></g>
  </svg>
  <div class="t blue" id="pt" style="left:77px;top:38px;font-size:22.3px;font-weight:bold">container24</div>
  <div class="abs" style="left:39px;top:82px;width:461px;height:1px;background:#d4d4d4"></div>
  <div class="t blue" style="left:108.5px;top:105px;font-size:16px;font-weight:bold">Esthetics</div>
  <div class="t blue" style="left:316.5px;top:105px;font-size:16px;font-weight:bold">Behaviour</div>
  <div class="abs" style="left:250px;top:144px;width:212px;height:1px;background:#bdbdbd"></div>
  <div class="abs" style="left:39px;top:143px;width:211px;height:2px;background:#14aeea"></div>
  <div class="t" style="left:59px;top:189px;font-size:16px;color:#8ab6de">Structure</div>
  <div class="t blue" style="left:188px;top:189px;font-size:15.8px;font-weight:bold">Styles</div>
  <div class="abs" style="left:39px;top:214px;width:423px;height:1px;background:#d4d4d4"></div>
  <div class="abs" style="left:66px;top:229px;width:82px;height:34px;border:1px solid #19b0ee;border-radius:4px"></div>
  <div class="t blue" style="left:66px;top:238px;width:82px;text-align:center;font-size:16px;font-weight:bold">Regular</div>
  <div class="abs" style="left:212px;top:229px;width:75px;height:34px;border:1px solid #7ed1f5;border-radius:4px"></div>
  <div class="t" style="left:212px;top:238px;width:75px;text-align:center;font-size:16px;color:#86b5de">Hover</div>
  <div class="abs" style="left:356px;top:229px;width:75px;height:34px;border:1px solid #7ed1f5;border-radius:4px"></div>
  <div class="t" style="left:356px;top:238px;width:75px;text-align:center;font-size:16px;color:#86b5de">Active</div>
  <!-- sections -->
  <div class="sec" style="left:61.5px;top:297px">Padding</div>
  <div class="t pl" style="left:39px;top:345px">Top</div><div class="t pl" style="left:150.5px;top:345px">Bottom</div><div class="t pl" style="left:262.5px;top:345px">Left</div><div class="t pl" style="left:374.5px;top:345px">Right</div>
  <div class="abs pi" style="left:38px"></div><div class="abs pi" style="left:149px"></div><div class="abs pi" style="left:261px"></div><div class="abs pi" style="left:373px"></div>
  <div class="t pv" style="left:49.5px">20</div><div class="t pv" style="left:161px">20</div><div class="t pv" style="left:273px">20</div><div class="t pv" style="left:385px">20</div>
  <div class="t pu" style="left:103.5px">px</div><div class="t pu" style="left:215px">px</div><div class="t pu" style="left:327px">px</div><div class="t pu" style="left:439px">px</div>
  <div class="sec" style="left:61.5px;top:424px">Background Image</div>
  <div class="sec" style="left:61.5px;top:483px">Background Color</div>
  <div class="abs" style="left:38px;top:519px;width:152px;height:49px;border:4px solid #f08d0c;border-radius:11px;box-shadow:0 1px 2px rgba(0,0,0,.45)"></div>
  <div class="abs" style="left:51px;top:533px;width:20px;height:20px;border-radius:4px;background:#8cbef4"></div>
  <div class="t" style="left:81.5px;top:535px;font-size:16px;color:#555">#8CBEF4</div>
  <div class="sec" style="left:61.5px;top:586px">Edges</div>
  <div class="sec" style="left:61.5px;top:646px">Round Edges</div>
  <div class="sec" style="left:61.5px;top:706px">Shadow</div>
  <div class="sec" style="left:61.5px;top:764px">Animations</div>
  <div class="sec" style="left:61.5px;top:823px">Tooltip</div>
  </div>
</div>

<!-- ================= COLOR PICKER ================= -->
<div class="abs" style="left:1447px;top:644px;width:10px;height:10px;background:#fff;transform:rotate(45deg);box-shadow:1px -1px 1px rgba(0,0,0,.12)"></div>
<div id="picker" class="abs" style="left:1051px;top:410px;width:400px;height:480px;background:#fff;border:1px solid #8f8f8f;border-radius:27px;box-shadow:0 3px 9px rgba(0,0,0,.35)">
  <div class="abs" style="left:15px;top:15px;width:184px;height:62px;background:#eceeee"></div>
  <div class="abs" style="left:199px;top:74.5px;width:184px;height:2.5px;background:#14aeea"></div>
  <div class="t blue" style="left:15px;top:38.5px;width:184px;text-align:center;font-size:16px;font-weight:bold">Library</div>
  <div class="t blue" style="left:199px;top:37.5px;width:184px;text-align:center;font-size:16px;font-weight:bold">Personalized</div>
  <div class="abs" style="left:18px;top:97px;width:35px;height:35px;border-radius:5px;background:#e0f2fd"></div>
  <svg class="abs" style="left:18px;top:97px" width="35" height="35" viewBox="0 0 35 35" fill="none" stroke="#0a63b4" stroke-linecap="butt" stroke-linejoin="miter">
    <defs><clipPath id="dc"><path d="M9 19.2H26V20A8.5 8.5 0 0 1 9 20Z"/></clipPath></defs>
    <path d="M10.2 17Q12.6 12.6 17.5 8.3Q22.4 12.6 24.8 17" stroke-width="2.2"/>
    <g clip-path="url(#dc)" stroke-width="2.2"><path d="M13.4 17L1.4 29M19.4 17L7.4 29M25.4 17L13.4 29M31 17.4L19.4 29"/></g>
  </svg>
  <svg class="abs" style="left:68.2px;top:105.1px" width="18.7" height="18.7" viewBox="0 0 18.7 18.7"><rect x="1" y="1" width="16.7" height="16.7" rx="2.6" fill="#fff" stroke="#56575d" stroke-width="2"/><rect x="2" y="8.4" width="14.7" height="8.3" fill="#56575d"/><g fill="#fff"><rect x="2.00" y="8.40" width="2.08" height="2.08"/><rect x="6.16" y="8.40" width="2.08" height="2.08"/><rect x="10.32" y="8.40" width="2.08" height="2.08"/><rect x="14.48" y="8.40" width="2.08" height="2.08"/><rect x="4.08" y="10.48" width="2.08" height="2.08"/><rect x="8.24" y="10.48" width="2.08" height="2.08"/><rect x="12.40" y="10.48" width="2.08" height="2.08"/><rect x="2.00" y="12.56" width="2.08" height="2.08"/><rect x="6.16" y="12.56" width="2.08" height="2.08"/><rect x="10.32" y="12.56" width="2.08" height="2.08"/><rect x="14.48" y="12.56" width="2.08" height="2.08"/><rect x="4.08" y="14.64" width="2.08" height="2.08"/><rect x="8.24" y="14.64" width="2.08" height="2.08"/><rect x="12.40" y="14.64" width="2.08" height="2.08"/></g><rect x="1" y="1" width="16.7" height="16.7" rx="2.6" fill="none" stroke="#56575d" stroke-width="2"/></svg>
  <!-- SV square -->
  <div class="abs" style="left:18px;top:145px;width:362px;height:190px;background:linear-gradient(to top,#000,rgba(0,0,0,0)),linear-gradient(to right,#fff,rgb(0,123,255))"></div>
  <div class="abs" style="left:163px;top:143.5px;width:18px;height:18px;border-radius:50%;background:#8cbef4;border:2px solid #fff;box-shadow:0 0 2px rgba(0,0,0,.35)"></div>
  <!-- hue -->
  <div class="abs" style="left:18px;top:355px;width:362px;height:10px;border-radius:5px;background:linear-gradient(to right,#f00 0%,#ff0 16.66%,#0f0 33.33%,#0ff 50%,#00f 66.66%,#f0f 83.33%,#f00 100%)"></div>
  <div class="abs" style="left:221.7px;top:351.7px;width:17px;height:17px;border-radius:50%;background:#0a77f5;border:2px solid #fff;box-shadow:0 1px 3px rgba(0,0,0,.35)"></div>
  <!-- alpha -->
  <div class="abs" style="left:18px;top:385px;width:362px;height:10px;border-radius:5px;background:linear-gradient(to right,rgba(255,255,255,0) 0%,#d9dbdf 18%,#b9c0ca 36%,#a3aebd 52%,#97aeca 72%,#8cbef4 100%)"></div>
  <div class="abs" style="left:364.5px;top:381.5px;width:17px;height:17px;border-radius:50%;background:#8cbef4;border:2px solid #fff;box-shadow:0 1px 3px rgba(0,0,0,.35)"></div>
  <!-- copy / paste -->
  <div class="abs" style="left:10.3px;top:416px;width:46.7px;height:42.7px;border:4px solid #f08d0c;border-radius:12px;box-shadow:0 1px 2px rgba(0,0,0,.4)"></div>
  <svg class="abs" style="left:0;top:0" width="400" height="479" viewBox="1052 411 400 479" fill="none" stroke="#0a63b4" stroke-width="1.8" stroke-linecap="round" stroke-linejoin="round">
    <g stroke-width="1.9"><path d="M1086.35 841.65Q1086.35 840.05 1087.95 840.05H1093.1L1096.65 843.6V852.45Q1096.65 854.05 1095.05 854.05H1087.95Q1086.35 854.05 1086.35 852.45Z"/><path d="M1092.7 840.4V844H1096.3"/><path d="M1086.2 843.95H1082.85Q1081.25 843.95 1081.25 845.55V856.25Q1081.25 857.85 1082.85 857.85H1089.85Q1091.45 857.85 1091.45 856.25V854.3"/><rect x="1120.55" y="842.45" width="12.7" height="15.4" rx="1.6"/><ellipse cx="1127" cy="840.9" rx="1.75" ry="1.6" stroke-width="1.5"/><path d="M1123.5 844.2H1130.5" stroke-width="1.7" stroke-linecap="butt"/></g>
  </svg>
  <!-- hex -->
  <div class="abs" style="left:165px;top:407px;width:215px;height:56px;border:1px solid #d9d9d9;border-radius:7px"></div>
  <div class="abs" style="left:177px;top:427px;width:17.3px;height:17px;background:#8cbef4"></div>
  <div class="t" style="left:210.5px;top:426.5px;font-size:17.2px;color:#4a4a4a">8CBEF4</div>
  <div class="abs" style="left:291.5px;top:421px;width:1.5px;height:30px;background:#cfcfcf"></div>
  <div class="t" style="left:307.5px;top:426.5px;font-size:17.2px;color:#4a4a4a">100</div>
  <div class="t" style="left:352px;top:426.5px;font-size:17.2px;color:#b4b4b4">%</div>
</div>

<!-- ================= BOTTOM ================= -->
<div id="hscroll" class="abs">
  <div class="abs" style="left:23px;top:5.3px;width:1032px;height:10.4px;border-radius:6px;background:#8a8a8a"></div>
  <svg class="abs" style="left:7px;top:4px" width="8" height="14" viewBox="0 0 8 13" preserveAspectRatio="none"><path d="M7 .5V12.5L.8 6.5Z" fill="#666"/></svg>
  <svg class="abs" style="left:1404px;top:4px" width="8" height="14" viewBox="0 0 8 13" preserveAspectRatio="none"><path d="M1 .5V12.5L7.2 6.5Z" fill="#666"/></svg>
</div>
<div id="tabs" class="abs">
  <div class="abs" style="left:226.5px;top:-1px;width:246px;height:46px;background:#fff;border-left:1px solid #dcdcdc;border-right:1px solid #dcdcdc"></div>
  <div class="abs" style="left:227px;top:39.5px;width:245px;height:6px;background:#0ea8e6"></div>
  <svg class="abs" style="left:0;top:0" width="480" height="45" viewBox="0 1036 480 45" fill="none" stroke="#7d7d7d" stroke-width="1.4" stroke-linejoin="round" stroke-linecap="round">
    <path d="M13.3 1054.5L19.5 1048.4L25.7 1054.5V1060.3H13.3Z"/>
    <path d="M98.6 1049.3H103.2L104.4 1050.6H110.6Q111.4 1050.6 111.4 1051.4V1059Q111.4 1059.8 110.6 1059.8H99.4Q98.6 1059.8 98.6 1059V1049.3Z" stroke-width="1.2"/><path d="M98.6 1051.3H104" stroke-width="1"/>
    <g stroke="#6a6f78" stroke-width="1.15"><rect x="242.6" y="1047.6" width="8.6" height="6.4" /><path d="M243 1049.8H251"/><path d="M240.6 1051.2H238.2V1060.2H247V1056.5M238.4 1054H241.5M238.4 1057H245"/></g>
  </svg>
  <div class="t" style="left:32.7px;top:10.5px;font-size:15px;color:#828282">Home</div>
  <div class="t" style="left:117.5px;top:10.5px;font-size:14.5px;color:#828282;letter-spacing:-.09px">Restaurant</div>
  <div class="t" style="left:257.5px;top:10.5px;font-size:14.5px;color:#505050;letter-spacing:-.13px">Purchase Requests (Global)</div>
  <svg class="abs" style="left:198.5px;top:13px" width="13" height="13" viewBox="0 0 13 13"><path d="M1.6 1.6L11.4 11.4M11.4 1.6L1.6 11.4" stroke="#858585" stroke-width="3"/></svg>
  <svg class="abs" style="left:447.5px;top:13px" width="13" height="13" viewBox="0 0 13 13"><path d="M1.6 1.6L11.4 11.4M11.4 1.6L1.6 11.4" stroke="#555" stroke-width="3"/></svg>
</div>
<div class="abs" style="left:1910px;top:0;width:10px;height:1036px;z-index:9;background:linear-gradient(90deg,rgba(0,0,0,0) 0%,rgba(0,0,0,.03) 50%,rgba(0,0,0,.11) 100%)"></div>
</div>
</body>
</html>
